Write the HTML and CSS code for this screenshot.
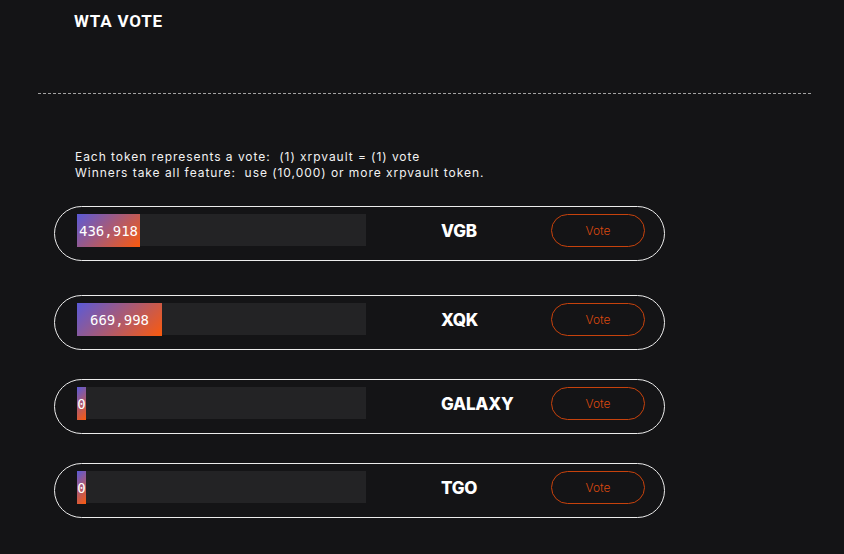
FILE: index.html
```html
<!DOCTYPE html>
<html lang="en">
<head>
  <meta charset="UTF-8" />
  <meta name="viewport" content="width=device-width, initial-scale=1.0" />
  <title>WTA Vote</title>
  <link rel="stylesheet" href="styles.css">
</head>

<body>
  <header class="top">
    <h1>WTA VOTE</h1>
  </header>

  <div class="divider"></div>

  <!-- Voting rules -->
  <p class="rules">
    Each token represents a vote:&nbsp; (1) xrpvault = (1) vote<br>
    Winners take all feature:&nbsp; use (10,000) or more xrpvault token.
  </p>

  <!-- Candidates -->
  <ul class="candidates">
    <li class="candidate first">
      <div class="track"><div class="fill" style="width: 63px;">436,918</div></div>
      <span class="name">VGB</span>
      <button class="vote-btn">Vote</button>
    </li>
    <li class="candidate">
      <div class="track"><div class="fill" style="width: 85px;">669,998</div></div>
      <span class="name">XQK</span>
      <button class="vote-btn">Vote</button>
    </li>
    <li class="candidate">
      <div class="track"><div class="fill" style="width: 9px;">0</div></div>
      <span class="name">GALAXY</span>
      <button class="vote-btn">Vote</button>
    </li>
    <li class="candidate">
      <div class="track"><div class="fill" style="width: 9px;">0</div></div>
      <span class="name">TGO</span>
      <button class="vote-btn">Vote</button>
    </li>
  </ul>
</body>
</html>
```

FILE: styles.css
```css
body {
  margin: 0;
  background: #141416;
  color: #f0f0f0;
  font-family: 'Inter', sans-serif;
}

.top {
  padding: 11px 0 0 74px;
}

.top h1 {
  margin: 0;
  font-family: 'Roboto', sans-serif;
  font-size: 17px;
  font-weight: 700;
  line-height: 20px;
  letter-spacing: 0.8px;
  color: #fff;
}

.divider {
  height: 1px;
  margin: 62px 32px 0 38px;
  background: repeating-linear-gradient(to right, #a3a3a3 0 3px, transparent 3px 5px);
}

.rules {
  margin: 55px 0 0 75px;
  font-size: 12px;
  line-height: 16px;
  letter-spacing: 0.95px;
  color: #f2f2f2;
}

.candidates {
  list-style: none;
  margin: 25px 0 0 54px;
  padding: 0;
  width: 611px;
  display: flex;
  flex-direction: column;
  gap: 29px;
}

.candidate {
  display: flex;
  align-items: flex-start;
  height: 33px;
  padding: 7px 19px 13px 22px;
  border: 1px solid #ececec;
  border-radius: 28px;
}

.candidate.first {
  margin-bottom: 5px;
}

.track {
  width: 289px;
  height: 32px;
  background: #232325;
}

.fill {
  height: 33px;
  display: flex;
  align-items: center;
  justify-content: center;
  white-space: nowrap;
  background: linear-gradient(135deg, #5a5ad8, #fb5a0d);
  font-family: 'DejaVu Sans Mono', monospace;
  font-size: 14px;
  color: #fff;
}

.name {
  flex: 1;
  margin-left: 75px;
  line-height: 35px;
  font-size: 17px;
  font-weight: 800;
  letter-spacing: -0.2px;
  color: #fff;
}

.vote-btn {
  width: 94px;
  height: 33px;
  padding: 0;
  border: 1px solid #c7420c;
  border-radius: 17px;
  background: transparent;
  color: #d9480f;
  font-family: 'Inter', sans-serif;
  font-size: 12px;
  font-weight: 300;
  cursor: pointer;
}
```
